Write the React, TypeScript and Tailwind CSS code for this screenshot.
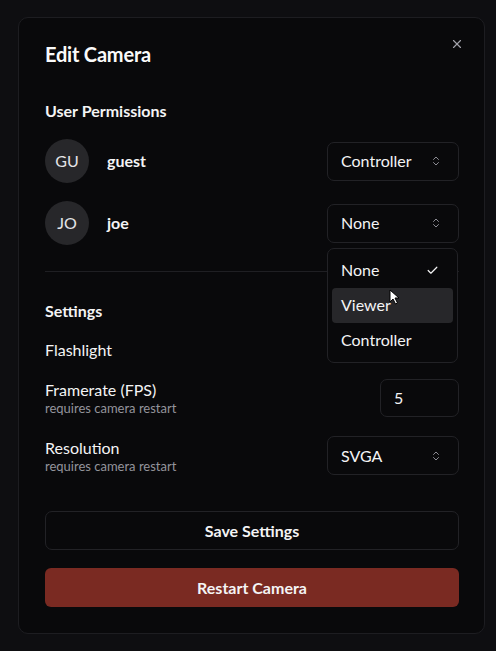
import { X, ChevronsUpDown, Check } from 'lucide-react'

const users = [
  { initials: 'GU', name: 'guest', role: 'Controller' },
  { initials: 'JO', name: 'joe', role: 'None' },
]

function SelectBox({ value, className = '' }: { value: string; className?: string }) {
  return (
    <div
      className={`flex h-[39px] w-[132px] items-center justify-between rounded-[7px] border border-[#222226] pl-[13px] pr-[16px] text-[16px] text-[#f4f4f5] ${className}`}
    >
      <span>{value}</span>
      <ChevronsUpDown size={12} className="text-[#8b8b93]" />
    </div>
  )
}

function RoleMenu() {
  return (
    <div className="absolute left-0 top-[44px] z-10 w-[131px] rounded-[7px] border border-[#222226] bg-[#09090b] p-[4px] text-[16px] text-[#f4f4f5]">
      <div className="flex h-[35px] items-center justify-between pl-[9px] pr-[14px]">
        <span>None</span>
        <Check size={13} strokeWidth={2.2} />
      </div>
      <div className="flex h-[35px] items-center rounded-[4px] bg-[#27272a] pl-[9px]">Viewer</div>
      <div className="flex h-[35px] items-center pl-[9px]">Controller</div>
      {/* mouse pointer */}
      <svg className="absolute left-[61px] top-[40px]" width="12" height="16" viewBox="0 0 12 16">
        <path d="M1 1 L1 13 L4 10 L6.5 15 L8.5 14 L6 9 L10 9 Z" fill="#ffffff" stroke="#000000" strokeWidth="1" />
      </svg>
    </div>
  )
}

export default function App() {
  return (
    <div className="min-h-[651px] bg-[#0e0e11] pt-[17px] font-['Lato',sans-serif]">
      <div className="relative ml-[18px] flex h-[617px] w-[467px] flex-col rounded-[10px] border border-[#1d1d21] bg-[#09090b] pl-[26px] pr-[25px] pt-[22px]">
        <button className="absolute right-[20px] top-[19px] text-[#a1a1aa]">
          <X size={14} strokeWidth={2} />
        </button>

        <h2 className="text-[20px] font-bold leading-[28px] tracking-[-0.2px] text-[#fafafa]">Edit Camera</h2>

        <h3 className="mt-[32px] text-[16px] font-bold leading-[22px] text-[#f4f4f5]">User Permissions</h3>

        <div className="mt-[17px] flex flex-col gap-[18px]">
          {users.map((u, i) => (
            <div key={u.name} className="flex items-center">
              <div className="flex h-[44px] w-[44px] items-center justify-center rounded-full bg-[#27272a] text-[16px] text-[#e4e4e7]">
                {u.initials}
              </div>
              <span className="ml-[18px] text-[16px] font-bold text-[#f4f4f5]">{u.name}</span>
              <div className="relative ml-auto">
                <SelectBox value={u.role} />
                {i === 1 && <RoleMenu />}
              </div>
            </div>
          ))}
        </div>

        <div className="mt-[26px] h-px bg-[#1f1f23]" />

        <h3 className="mt-[28px] text-[16px] font-bold leading-[22px] text-[#f4f4f5]">Settings</h3>

        <div className="mt-[17px] text-[16px] leading-[22px] text-[#f4f4f5]">Flashlight</div>

        <div className="mt-[18px] flex items-center justify-between">
          <div className="flex flex-col">
            <span className="text-[16px] leading-[20px] text-[#f4f4f5]">Framerate (FPS)</span>
            <span className="text-[13px] leading-[16px] text-[#94949c]">requires camera restart</span>
          </div>
          <div className="flex h-[38px] w-[79px] items-center rounded-[7px] border border-[#222226] pl-[13px] text-[16px] text-[#f4f4f5]">
            5
          </div>
        </div>

        <div className="mt-[19px] flex items-center justify-between">
          <div className="flex flex-col">
            <span className="text-[16px] leading-[20px] text-[#f4f4f5]">Resolution</span>
            <span className="text-[13px] leading-[16px] text-[#94949c]">requires camera restart</span>
          </div>
          <SelectBox value="SVGA" />
        </div>

        <button className="mt-[36px] flex h-[39px] items-center justify-center rounded-[7px] border border-[#222226] text-[16px] font-bold text-[#f4f4f5]">
          Save Settings
        </button>

        <button className="mt-[18px] flex h-[39px] items-center justify-center rounded-[6px] bg-[#7a2a22] text-[16px] font-bold text-[#f4f4f5]">
          Restart Camera
        </button>
      </div>
    </div>
  )
}
